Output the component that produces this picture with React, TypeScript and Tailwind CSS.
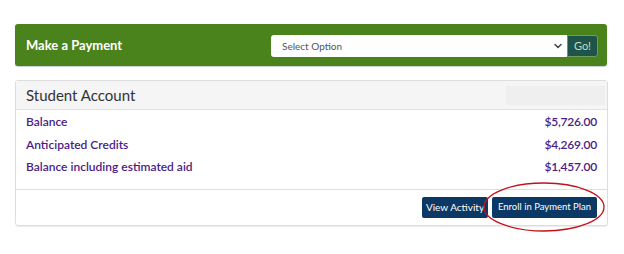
import React from 'react';
import { ChevronDown } from 'lucide-react';

const rows = [
  { label: 'Balance', amount: '$5,726.00' },
  { label: 'Anticipated Credits', amount: '$4,269.00' },
  { label: 'Balance including estimated aid', amount: '$1,457.00' },
];

export default function App() {
  return (
    <div className="w-[624px] h-[254px] bg-white pt-6 px-[15px] font-['Lato',sans-serif]">
      {/* payment bar */}
      <div className="w-[592px] h-[42px] bg-[#4a831c] rounded-[3px] flex items-center justify-between pl-[11px] pr-[9px] pt-[2px] shadow-[0_1px_1px_rgba(0,0,0,0.2)]">
        <span className="text-white font-bold text-[13px]">Make a Payment</span>
        <div className="flex items-center">
          <div className="w-[296px] h-[22px] bg-white rounded-l-[3px] flex items-center justify-between pl-[11px] pr-[3px]">
            <span className="text-[10px] text-[#555]">Select Option</span>
            <ChevronDown className="w-3 h-3 text-[#444]" strokeWidth={3} />
          </div>
          <button className="w-[31px] h-[22px] bg-[#1e5449] text-[#c6dcc0] text-[11px] rounded-r-[3px] border border-[#6e9a5c]">
            Go!
          </button>
        </div>
      </div>

      {/* account card */}
      <div className="mt-[14px] w-[593px] border border-[#ddd] rounded-[3px] shadow-[0_1px_1px_rgba(0,0,0,0.08)]">
        <div className="h-[29px] bg-[#f5f5f5] border-b border-[#e3e3e3] flex items-center justify-between pl-[10px] pr-[2px]">
          <span className="text-[15px] text-[#333]">Student Account</span>
          <div className="w-[99px] h-[19px] bg-[#efefef]" />
        </div>
        <div className="pt-[1px] pb-[10px] px-[10px] flex flex-col">
          {rows.map(r => (
            <div key={r.label} className="h-[22.5px] flex items-center justify-between text-[12px] font-semibold text-[#4b1a86]">
              <span>{r.label}</span>
              <span className="tracking-[-0.2px]">{r.amount}</span>
            </div>
          ))}
        </div>
        <div className="relative border-t border-[#ddd] h-[36px] flex items-center justify-end gap-[4px] pr-[10px]">
          <button className="w-[66px] h-[21px] bg-[#0c3866] text-white text-[10px] rounded-[2px]">View Activity</button>
          <button className="w-[105px] h-[21px] bg-[#0c3866] text-white text-[9.5px] rounded-[2px]">Enroll in Payment Plan</button>
          <svg className="absolute left-[466px] top-[-9px] pointer-events-none" width="124" height="52" viewBox="0 0 124 52">
            <ellipse cx="62" cy="26" rx="60" ry="24" fill="none" stroke="#c0121b" strokeWidth="1.3" />
          </svg>
        </div>
      </div>
    </div>
  );
}
